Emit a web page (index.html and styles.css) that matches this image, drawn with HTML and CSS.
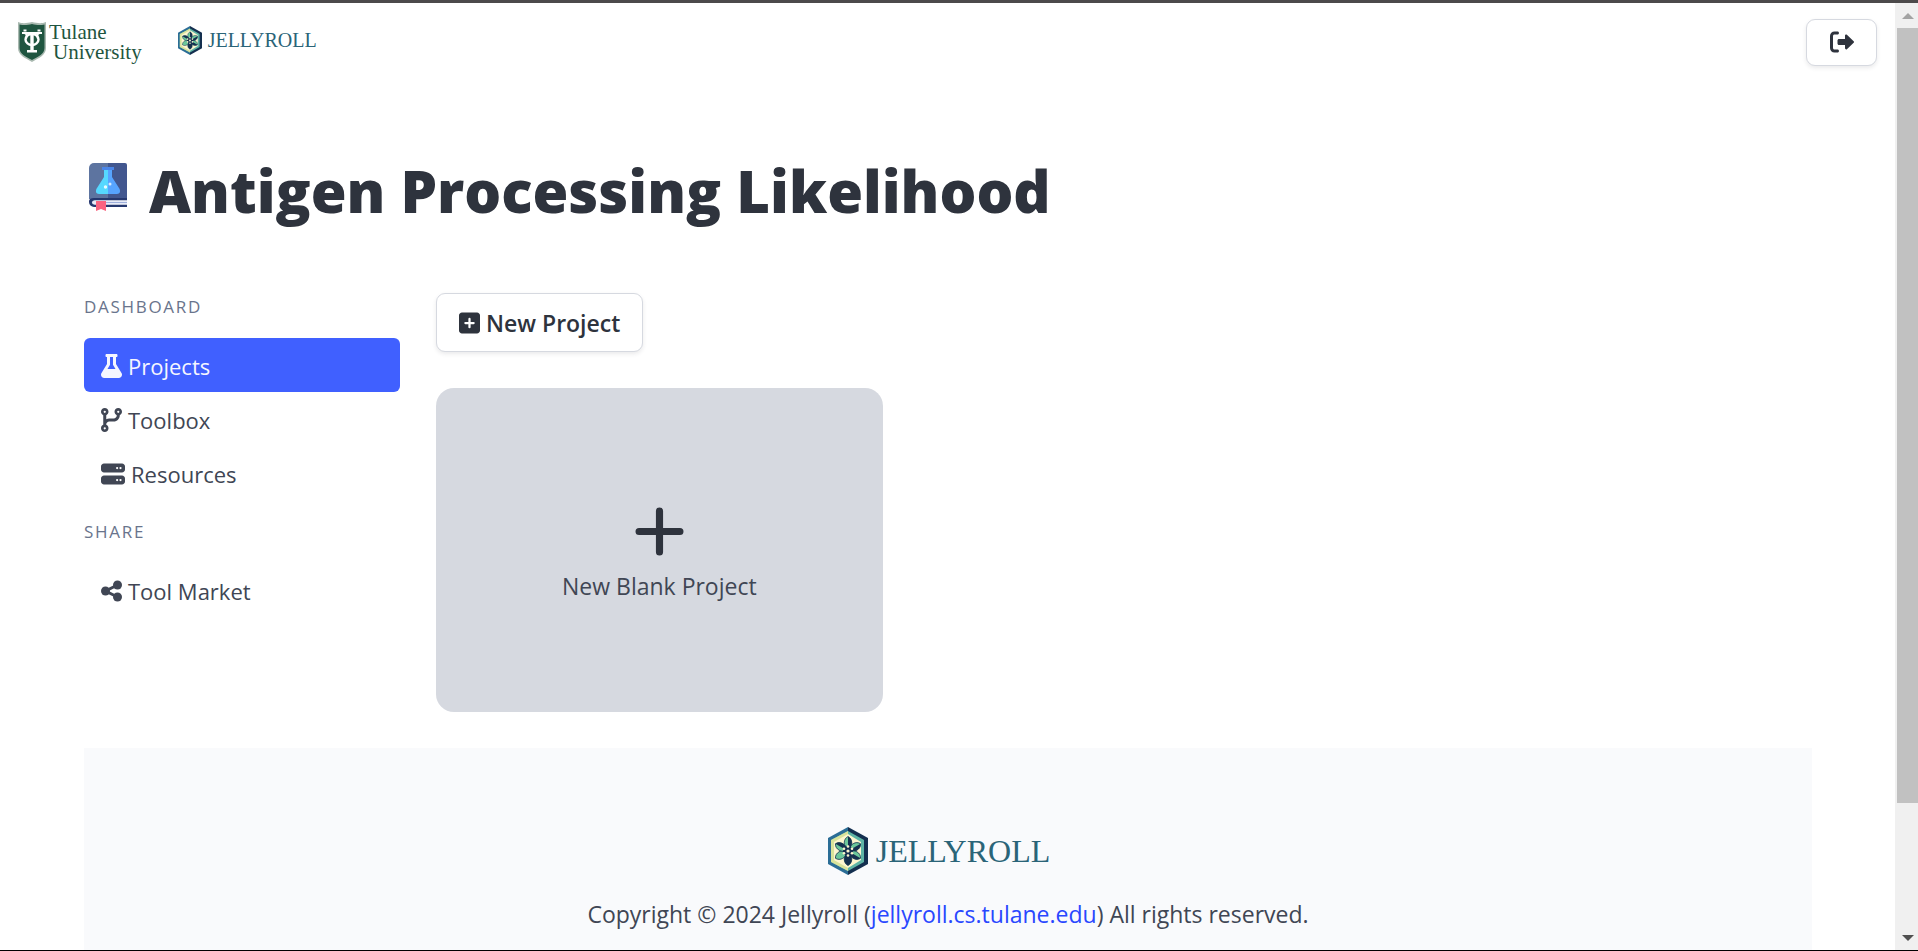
FILE: index.html
```html
<!DOCTYPE html>
<html lang="en">
<head>
<meta charset="utf-8">
<title>Jellyroll - Projects</title>
<link rel="stylesheet" href="styles.css">
</head>
<body>
<svg class="sprite" aria-hidden="true">
  <symbol id="hex" viewBox="0 0 40 48">
    <path fill="#2b6d96" d="M20 0 0 11v26l20 11z"/>
    <path fill="#142f4f" d="M20 0l20 11v26L20 48z"/>
    <path fill="#5fb5a6" d="M20 4 3 13v22l17 9 16-9V13z"/>
    <path fill="#d9e39b" d="M20 4 3 13v22l17 9z"/>
    <path fill="#fdf6cf" d="M20 7 6 15v18l14 8 13-8V15z"/>
    <g stroke="#1b3a57" stroke-width=".8" fill="#6cc79a">
      <path id="petal" d="M20 24c-5-5-5-12 0-14.500 5 2.500 5 9.500 0 14.500z"/>
      <use href="#petal" transform="rotate(60 20 24)"/>
      <use href="#petal" transform="rotate(120 20 24)"/>
      <use href="#petal" transform="rotate(180 20 24)"/>
      <use href="#petal" transform="rotate(240 20 24)"/>
      <use href="#petal" transform="rotate(300 20 24)"/>
    </g>
    <g fill="#15304f">
      <path id="shade" d="M20 24V9.500c5 2.500 5 9.500 0 14.500z"/>
      <use href="#shade" transform="rotate(60 20 24)"/>
      <use href="#shade" transform="rotate(120 20 24)"/>
      <use href="#shade" transform="rotate(300 20 24)"/>
      <path d="M20 24v14.500c5-2.500 5-9.500 0-14.500zM20 24c-5 5-5 12 0 14.500z"/>
    </g>
    <circle cx="20" cy="24" r="5" fill="#15304f"/>
    <g fill="#fdf6cf"><circle cx="20" cy="24" r="1.600"/><circle cx="20" cy="19.500" r="1.300"/><circle cx="24" cy="21.700" r="1.300"/><circle cx="24" cy="26.300" r="1.300"/><circle cx="20" cy="28.500" r="1.300"/><circle cx="16" cy="26.300" r="1.300"/><circle cx="16" cy="21.700" r="1.300"/></g>
  </symbol>
</svg>

<div class="page">
  <header class="navbar">
    <a class="tulane" href="#">
      <svg class="shield" viewBox="0 0 28 40" aria-hidden="true">
        <path fill="#a9b9b0" d="M0 0c5 2 9 1 14 0 5 1 9 2 14 0v26c0 7-7 10-14 14C7 36 0 33 0 26z"/>
        <path fill="#1f5540" d="M1.500 2.500c5 1 8 .5 12.500-.5 4.500 1 7.500 1.500 12.500.5V26c0 6-6 8.500-12.500 12C7.500 34.500 1.500 32 1.500 26z"/>
        <path fill="none" stroke="#fff" stroke-width="2" d="M4 11h5M19 11h5M5.500 8.500l3 0M19.500 8.500h3"/>
        <ellipse cx="14" cy="17.500" rx="6.500" ry="5.500" fill="none" stroke="#fff" stroke-width="2.400"/>
        <path fill="none" stroke="#fff" stroke-width="2" d="M6 11c3 0 3 3 2 6M22 11c-3 0-3 3-2 6"/>
        <path fill="#fff" d="M8 10h12v2.500h-4.300V28H19v2.500H9V28h3.300V12.500H8z"/>
      </svg>
      <span class="tulane-name"><span>Tulane</span><span class="second">University</span></span>
    </a>
    <a class="brand" href="#">
      <svg class="hex" aria-hidden="true"><use href="#hex"/></svg>
      <span>JELLYROLL</span>
    </a>
    <button class="button logout" type="button" aria-label="Log out">
      <svg class="icon-wide" viewBox="0 0 512 512" aria-hidden="true"><path d="M96 480h64C177.700 480 192 465.700 192 448S177.700 416 160 416H96c-17.670 0-32-14.330-32-32V128c0-17.670 14.330-32 32-32h64C177.700 96 192 81.670 192 64S177.700 32 160 32H96C42.980 32 0 74.980 0 128v256C0 437 42.980 480 96 480zM504.800 238.500l-144.100-136c-6.975-6.578-17.200-8.375-26-4.594c-8.803 3.797-14.510 12.470-14.510 22.050l-.0918 72l-128-.001c-17.690 0-32.020 14.330-32.020 32v64c0 17.670 14.340 32 32.020 32l128 .001l.0918 71.100c0 9.578 5.707 18.250 14.510 22.050c8.803 3.781 19.030 1.984 26-4.594l144.100-136C514.400 264.400 514.400 247.600 504.800 238.500z"/></svg>
    </button>
  </header>

  <div class="container">
    <div class="heading">
      <svg class="book" viewBox="0 0 38 48" aria-hidden="true">
        <path fill="#5d74a0" d="M0 5a5 5 0 0 1 5-5h14v36H0z"/>
        <path fill="#42578f" d="M19 0h17a2 2 0 0 1 2 2v34H19z"/>
        <path fill="#26386f" d="M0 38c0-2 2-3 5-3h33v2.500H6a2 2 0 0 0 0 4h32V44H5a5 5 0 0 1-5-5z"/>
        <path fill="#e8ecf8" d="M5 37.500h33v4H5a2 2 0 0 1 0-4z"/>
        <path fill="#9fb0dc" d="M12 39h26v1H12z"/>
        <path fill="#56d8ff" d="M15 6h4v25H10c-3 0-4-3-2-6l7-11z"/>
        <path fill="#57a4ff" d="M19 6h4v8l7 11c2 3 1 6-2 6h-9z"/>
        <path fill="#4a86e8" d="M13 4h12v3H13z"/>
        <circle cx="16.500" cy="24" r="1.700" fill="#e9fbff"/><circle cx="21" cy="21" r="1.500" fill="#d5ecff"/>
        <path fill="#fa6380" d="M7 38h10v10l-5-2-5 2z"/>
      </svg>
      <h1>Antigen Processing Likelihood</h1>
    </div>

    <div class="columns">
      <nav class="menu" aria-label="Dashboard">
        <p class="label">Dashboard</p>
        <ul>
          <li><a class="active" href="#"><svg class="icon" viewBox="0 0 448 512" aria-hidden="true"><path d="M437.200 403.500L320 215V64h8c13.300 0 24-10.700 24-24V24c0-13.300-10.700-24-24-24H120c-13.300 0-24 10.700-24 24v16c0 13.300 10.700 24 24 24h8v151L10.800 403.500C-18.500 450.600 15.300 512 70.900 512h306.200c55.700 0 89.400-61.500 60.100-108.500zM137.900 320l48.200-77.600c3.700-5.200 5.800-11.600 5.800-18.400V64h64v160c0 6.900 2.200 13.200 5.800 18.400l48.200 77.600h-172z"/></svg>Projects</a></li>
          <li><a href="#"><svg class="icon" viewBox="0 0 448 512" aria-hidden="true"><path fill-rule="evenodd" d="M80 104a24 24 0 1 0 0-48 24 24 0 1 0 0 48zm80-24c0 32.800-19.700 61-48 73.300V241c18.800-10.900 40.700-17 64-17h96c35.300 0 64-28.700 64-64v-6.700C307.700 141 288 112.800 288 80c0-44.200 35.800-80 80-80s80 35.800 80 80c0 32.800-19.700 61-48 73.300V160c0 70.700-57.300 128-128 128H176c-35.300 0-64 28.700-64 64v6.700c28.300 12.300 48 40.500 48 73.300c0 44.200-35.800 80-80 80s-80-35.800-80-80c0-32.800 19.700-61 48-73.300V153.300C19.700 141 0 112.800 0 80C0 35.800 35.800 0 80 0s80 35.800 80 80zm232 0a24 24 0 1 0-48 0 24 24 0 1 0 48 0zM80 456a24 24 0 1 0 0-48 24 24 0 1 0 0 48z"/></svg>Toolbox</a></li>
          <li><a href="#"><svg class="icon-wide" viewBox="0 0 512 512" aria-hidden="true"><path id="rack" d="M64 32C28.700 32 0 60.700 0 96v64c0 35.300 28.700 64 64 64h384c35.300 0 64-28.700 64-64V96c0-35.300-28.700-64-64-64H64zm280 72a24 24 0 1 1 0 48 24 24 0 1 1 0-48zm48 24a24 24 0 1 1 48 0 24 24 0 1 1-48 0z"/><use href="#rack" y="256"/></svg>Resources</a></li>
        </ul>
        <p class="label">Share</p>
        <ul>
          <li><a href="#"><svg class="icon" viewBox="0 0 448 512" aria-hidden="true"><circle cx="352" cy="128" r="96"/><circle cx="96" cy="256" r="96"/><circle cx="352" cy="384" r="96"/><path fill="none" stroke="currentColor" stroke-width="64" d="M352 128 96 256l256 128"/></svg>Tool Market</a></li>
        </ul>
      </nav>

      <main class="content">
        <button class="button new-project" type="button"><svg class="icon" viewBox="0 0 448 512" aria-hidden="true"><path d="M64 32C28.700 32 0 60.700 0 96v320c0 35.300 28.700 64 64 64h320c35.300 0 64-28.700 64-64V96c0-35.300-28.700-64-64-64H64zm136 312v-64h-64a24 24 0 0 1 0-48h64v-64a24 24 0 0 1 48 0v64h64a24 24 0 0 1 0 48h-64v64a24 24 0 0 1-48 0z"/></svg>New Project</button>
        <div class="grid">
          <button class="card" type="button">
            <svg class="plus" viewBox="0 0 48 48" aria-hidden="true"><path d="M24 4v40M4 24h40"/></svg>
            <span>New Blank Project</span>
          </button>
        </div>
      </main>
    </div>

    <footer class="footer">
      <div class="brand large">
        <svg class="hex" aria-hidden="true"><use href="#hex"/></svg>
        <span>JELLYROLL</span>
      </div>
      <p>Copyright © 2024 Jellyroll (<a href="#">jellyroll.cs.tulane.edu</a>) All rights reserved.</p>
    </footer>
  </div>
</div>

<div class="scrollbar" aria-hidden="true">
  <svg class="arrow" viewBox="0 0 12 6"><path fill="#a3a3a3" d="M0 6l6-6 6 6z"/></svg>
  <div class="track"><div class="thumb"></div></div>
  <svg class="arrow" viewBox="0 0 12 6"><path fill="#505050" d="M0 0h12L6 6z"/></svg>
</div>
</body>
</html>
```
FILE: styles.css
```css
* { box-sizing: border-box; }

body {
  margin: 0;
  height: 100vh;
  display: flex;
  overflow: hidden;
  border-top: 3px solid #4c4a4b;
  border-bottom: 1px solid #000;
  background: #fff;
  color: #404654;
  font-family: "Open Sans", "Noto Sans", sans-serif;
  font-size: 23px;
  line-height: 36px;
}

a { color: inherit; text-decoration: none; }
ul { list-style: none; margin: 0; padding: 0; }
p { margin: 0; }
svg { fill: currentColor; flex: none; }
button { font: inherit; color: inherit; cursor: pointer; }

.sprite { position: absolute; width: 0; height: 0; }
.page { flex: 1; overflow: hidden; }

.navbar {
  display: flex;
  align-items: center;
  gap: 36px;
  height: 78px;
  padding: 0 18px;
}

.tulane { display: flex; align-items: center; gap: 3px; color: #1f5540; }
.shield { width: 28px; height: 40px; }
.tulane-name {
  display: flex;
  flex-direction: column;
  font-family: "Liberation Serif", serif;
  font-size: 21px;
  line-height: 20px;
}
.second { padding-left: 4px; }

.brand {
  display: flex;
  align-items: center;
  gap: 6px;
  color: #2a6478;
  font-family: "Liberation Serif", serif;
  font-size: 20px;
}
.navbar .brand { padding-bottom: 4px; }
.hex { width: 24px; height: 29px; }
.brand.large { justify-content: center; gap: 8px; padding-right: 18px; font-size: 32px; }
.large .hex { width: 40px; height: 48px; }

.button {
  display: inline-flex;
  align-items: center;
  justify-content: center;
  gap: 6px;
  border: 1px solid #d6d9e0;
  border-radius: 9px;
  background: #fff;
  color: #2e333d;
  font-weight: 600;
  box-shadow: 0 2px 4px rgba(46, 51, 61, .1);
}
.logout { margin-left: auto; width: 71px; height: 47px; }
.icon { width: 21px; height: 24px; }
.icon-wide { width: 24px; height: 24px; }

.container { margin: 0 83px 0 84px; }

.heading {
  display: flex;
  align-items: center;
  gap: 22px;
  padding: 68px 5px 60px;
  color: #2e333d;
}
.book { width: 38px; height: 48px; margin-bottom: 8px; }
h1 {
  margin: 0;
  font-size: 58px;
  font-weight: 800;
  line-height: 84px;
}

.columns { display: flex; gap: 36px; }
.menu { flex: 0 0 316px; font-size: 22px; }
.label {
  margin-bottom: 18px;
  color: #69748c;
  font-size: 17px;
  line-height: 27px;
  letter-spacing: .1em;
  text-transform: uppercase;
}
ul + .label { margin-top: 18px; }
.menu a {
  display: flex;
  align-items: center;
  gap: 6px;
  padding: 10px 17px 8px;
  border-radius: 6px;
}
.menu .active { background: #4060ff; color: #f5f6ff; }

.content { flex: 1; }
.new-project { height: 59px; padding: 0 22px; }
.grid {
  display: grid;
  grid-template-columns: repeat(3, 1fr);
  gap: 18px;
  margin-top: 36px;
}
.card {
  display: flex;
  flex-direction: column;
  align-items: center;
  justify-content: center;
  gap: 12px;
  height: 324px;
  padding-top: 12px;
  border: 0;
  border-radius: 18px;
  background: #d6d9e0;
}
.plus {
  width: 49px;
  height: 49px;
  fill: none;
  stroke: #2e333d;
  stroke-width: 7;
  stroke-linecap: round;
}

.footer {
  margin-top: 36px;
  padding: 79px 36px 144px;
  background: #f9fafc;
  text-align: center;
}
.footer p { margin-top: 21px; }
.footer a { color: #2947ff; }

.scrollbar {
  display: flex;
  flex-direction: column;
  align-items: center;
  width: 23px;
  padding: 10px 0 9px 2px;
  background: #f0f0f0;
}
.arrow { width: 12px; height: 6px; }
.track { flex: 1; align-self: stretch; margin: 9px 0; }
.thumb { height: 86.3%; background: #c1c1c1; }
```
